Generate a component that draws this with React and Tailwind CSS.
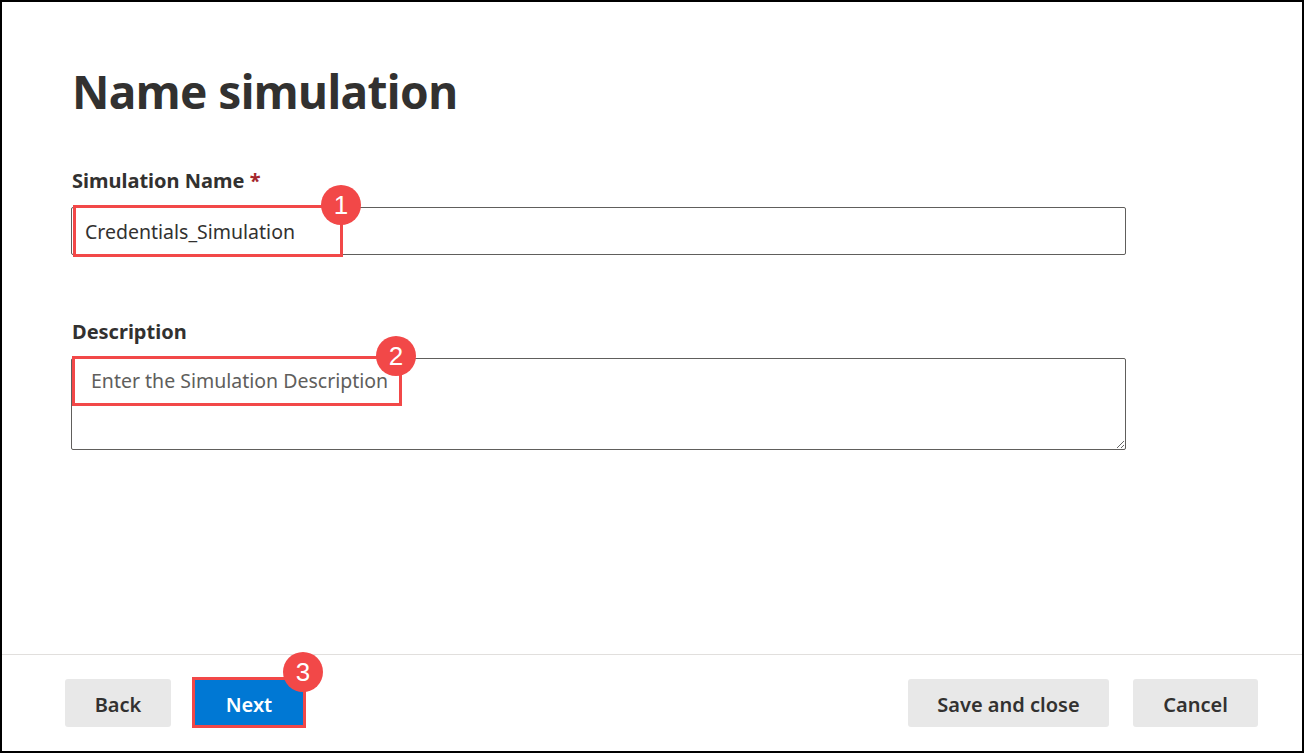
import React from "react";

function Badge({ n, className }) {
  return (
    <div
      className={
        "absolute w-[40px] h-[40px] rounded-full bg-[#f24848] text-white flex items-center justify-center text-[26px] leading-none font-['Liberation_Sans',sans-serif] " +
        className
      }
    >
      {n}
    </div>
  );
}

export default function App() {
  return (
    <div className="w-[1304px] h-[753px] border-2 border-black bg-white flex flex-col font-['Noto_Sans',sans-serif] text-[#323130] overflow-hidden">
      <div className="flex-1 pl-[69px] pt-[65px]">
        <h1 className="text-[46px] leading-[48px] font-bold tracking-[-0.6px] pl-[1px]">Name simulation</h1>

        <div className="mt-[52px] text-[20px] leading-[28px] font-bold pl-[1px]">
          Simulation Name <span className="text-[#a4262c]">*</span>
        </div>
        <div className="relative mt-[12px] w-[1055px] h-[48px] border border-[#605e5c] rounded-[2px] flex items-center pl-[13px] pt-[1px] text-[19.5px] leading-[28px]">
          Credentials_Simulation
          <div className="absolute left-[1px] top-[-3px] w-[270px] h-[52px] border-[3px] border-[#f24848]" />
          <Badge n="1" className="left-[249px] top-[-23px]" />
        </div>

        <div className="mt-[63px] text-[20px] leading-[28px] font-bold pl-[1px]">Description</div>
        <div className="relative mt-[12px] w-[1055px] h-[92px]">
          <textarea
            readOnly
            placeholder="Enter the Simulation Description"
            className="w-full h-full border border-[#605e5c] rounded-[2px] pl-[19px] pt-[8px] text-[19.5px] leading-[28px] text-[#323130] placeholder:text-[#605e5c] outline-none resize-y font-['Noto_Sans',sans-serif]"
          />
          <div className="absolute left-[1px] top-[-2px] w-[330px] h-[50px] border-[3px] border-[#f24848] pointer-events-none" />
          <Badge n="2" className="left-[305px] top-[-22px]" />
        </div>
      </div>

      <div className="h-[97px] border-t border-[#e1dfdd] flex items-center justify-between pl-[63px] pr-[44px]">
        <div className="flex items-center gap-[24px]">
          <button className="w-[106px] h-[48px] pt-[4px] rounded-[3px] bg-[#e8e8e8] text-[20px] font-semibold text-[#323130]">
            Back
          </button>
          <div className="relative">
            <button className="w-[108px] h-[48px] pt-[4px] bg-[#0078d4] text-[20px] font-semibold text-white">Next</button>
            <div className="absolute left-[-3px] right-[-3px] top-[-2px] bottom-[-1px] border-[3px] border-[#f24848] pointer-events-none" />
            <Badge n="3" className="left-[88px] top-[-27px]" />
          </div>
        </div>
        <div className="flex items-center gap-[24px]">
          <button className="w-[201px] h-[48px] pt-[4px] rounded-[3px] bg-[#e8e8e8] text-[20px] font-semibold text-[#323130]">
            Save and close
          </button>
          <button className="w-[125px] h-[48px] pt-[4px] rounded-[3px] bg-[#e8e8e8] text-[20px] font-semibold text-[#323130]">
            Cancel
          </button>
        </div>
      </div>
    </div>
  );
}
